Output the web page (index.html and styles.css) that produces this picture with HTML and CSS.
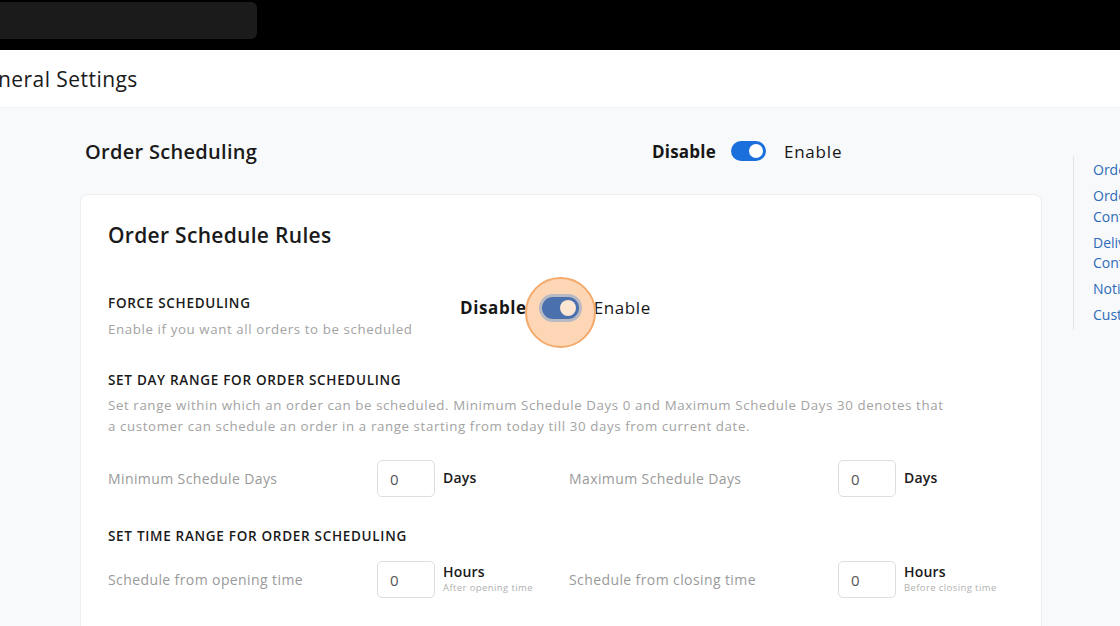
FILE: index.html
```html
<!DOCTYPE html>
<html lang="en">
<head>
<meta charset="utf-8">
<title>General Settings</title>
<link rel="stylesheet" href="styles.css">
</head>
<body>
<div class="topbar"><div class="topbar-pill"></div></div>
<header class="page-header"><h1 class="page-title">General Settings</h1></header>
<main class="main">
  <div class="content">
    <div class="section-head">
      <h2 class="section-title">Order Scheduling</h2>
      <div class="switch-group">
        <span class="sw-off">Disable</span>
        <span class="toggle"><span class="knob"></span></span>
        <span class="sw-on">Enable</span>
      </div>
    </div>
    <section class="card">
      <h3 class="card-title">Order Schedule Rules</h3>
      <div class="rule-row">
        <div class="rule-text">
          <div class="rule-label">FORCE SCHEDULING</div>
          <div class="rule-desc">Enable if you want all orders to be scheduled</div>
        </div>
        <div class="switch-group switch-group--inner">
          <span class="sw-off">Disable</span>
          <span class="toggle-wrap">
            <span class="click-ring"></span>
            <span class="toggle toggle--focus"><span class="knob"></span></span>
          </span>
          <span class="sw-on">Enable</span>
        </div>
      </div>
      <div class="rule-block">
        <div class="rule-label">SET DAY RANGE FOR ORDER SCHEDULING</div>
        <p class="rule-desc rule-desc--wide">Set range within which an order can be scheduled. Minimum Schedule Days 0 and Maximum Schedule Days 30 denotes that a customer can schedule an order in a range starting from today till 30 days from current date.</p>
        <div class="field-grid">
          <div class="field">
            <span class="field-label">Minimum Schedule Days</span>
            <span class="num-input">0</span>
            <span class="unit"><b>Days</b></span>
          </div>
          <div class="field">
            <span class="field-label">Maximum Schedule Days</span>
            <span class="num-input">0</span>
            <span class="unit"><b>Days</b></span>
          </div>
        </div>
      </div>
      <div class="rule-block rule-block--time">
        <div class="rule-label">SET TIME RANGE FOR ORDER SCHEDULING</div>
        <div class="field-grid field-grid--time">
          <div class="field">
            <span class="field-label">Schedule from opening time</span>
            <span class="num-input">0</span>
            <span class="unit"><b>Hours</b><small>After opening time</small></span>
          </div>
          <div class="field">
            <span class="field-label">Schedule from closing time</span>
            <span class="num-input">0</span>
            <span class="unit"><b>Hours</b><small>Before closing time</small></span>
          </div>
        </div>
      </div>
    </section>
  </div>
  <nav class="side-nav">
    <a href="#">Order Types</a>
    <a href="#">Order Confirmation</a>
    <a href="#">Delivery Configuration</a>
    <a href="#">Notifications</a>
    <a href="#">Customers</a>
  </nav>
</main>
</body>
</html>
```

FILE: styles.css
```css
* { box-sizing: border-box; }
html, body { margin: 0; padding: 0; }
body {
  width: 1120px;
  height: 626px;
  overflow: hidden;
  font-family: "Open Sans", "Noto Sans", sans-serif;
  color: #161616;
  background: #f8f9fa;
}
.topbar {
  height: 50px;
  background: #000;
  padding-top: 2px;
}
.topbar-pill {
  width: 257px;
  height: 37px;
  background: #1b1b1b;
  border-radius: 0 6px 6px 0;
}
.page-header {
  height: 58px;
  background: #fff;
  display: flex;
  align-items: center;
  border-bottom: 1px solid #f1f2f4;
}
.page-title {
  margin: 0 0 0 -30px;
  font-size: 21px;
  font-weight: 400;
  color: #1a1a1a;
  letter-spacing: 0.45px;
}
.main {
  display: flex;
  align-items: flex-start;
  padding-left: 80px;
  width: 1120px;
  overflow: hidden;
}
.content {
  width: 962px;
  flex: none;
}
.section-head {
  display: grid;
  grid-template-columns: 567px 1fr;
  align-items: center;
  height: 86px;
  padding-left: 5px;
}
.section-title {
  margin: 0;
  font-size: 20px;
  font-weight: 600;
  color: #1a1a1a;
  letter-spacing: 0.3px;
}
.switch-group {
  display: flex;
  align-items: center;
  font-size: 17px;
}
.sw-off { font-weight: 700; letter-spacing: 0.2px; }
.sw-on { font-weight: 400; letter-spacing: 0.8px; }
.toggle {
  position: relative;
  width: 35px;
  height: 20px;
  border-radius: 10px;
  background: #1b6fdc;
  margin: 0 18px 0 15px;
  display: inline-block;
}
.knob {
  position: absolute;
  right: 3px;
  top: 3px;
  width: 14px;
  height: 14px;
  border-radius: 50%;
  background: #fff;
}
.card {
  background: #fff;
  border: 1px solid #eceef0;
  border-radius: 8px;
  padding: 26px 27px 40px;
  height: 460px;
}
.card-title {
  margin: 0 0 44px;
  font-size: 21px;
  font-weight: 600;
  color: #1a1a1a;
  letter-spacing: 0.3px;
}
.rule-row {
  display: grid;
  grid-template-columns: 352px 1fr;
  align-items: start;
}
.rule-label {
  font-size: 13.5px;
  font-weight: 600;
  color: #1a1a1a;
  line-height: 20px;
  letter-spacing: 0.7px;
}
.rule-desc {
  margin: 6px 0 0;
  font-size: 13.3px;
  color: #a3a3a3;
  line-height: 21px;
  letter-spacing: 0.6px;
}
.rule-desc--wide { max-width: 845px; margin-top: 5px; }
.switch-group--inner { padding-top: 3px; }
.switch-group--inner .sw-off { letter-spacing: 0.6px; }
.switch-group--inner .sw-on { letter-spacing: 0.6px; }
.toggle-wrap {
  position: relative;
  display: inline-flex;
  align-items: center;
  margin: 0 15px 0 15px;
}
.switch-group--inner .toggle { margin: 0; }
.click-ring {
  position: absolute;
  left: 50%;
  top: 50%;
  width: 71px;
  height: 71px;
  margin: -31px 0 0 -35px;
  border-radius: 50%;
  background: #fdd6b6;
  border: 2px solid #f3aa6c;
}
.toggle--focus {
  width: 37px;
  height: 22px;
  border-radius: 11px;
  background: #4a70ad;
  box-shadow: 0 0 0 3px #b9b9c4;
}
.toggle--focus .knob {
  width: 16px;
  height: 16px;
  background: #fde6d2;
}
.rule-block { margin-top: 30px; }
.rule-block--time { margin-top: 29px; }
.field-grid {
  display: grid;
  grid-template-columns: 461px 1fr;
  margin-top: 23px;
}
.field-grid--time { margin-top: 15px; }
.field {
  display: flex;
  align-items: center;
}
.field-label {
  width: 269px;
  font-size: 14px;
  color: #9a9a9a;
  letter-spacing: 0.4px;
}
.num-input {
  width: 58px;
  height: 37px;
  border: 1px solid #dedede;
  border-radius: 5px;
  display: flex;
  align-items: center;
  padding-left: 12px;
  font-size: 15px;
  color: #555;
}
.unit {
  margin-left: 8px;
  display: flex;
  flex-direction: column;
  align-self: flex-start;
  padding-top: 9px;
}
.field-grid--time .unit { padding-top: 2px; }
.unit b {
  font-size: 14px;
  font-weight: 600;
  color: #1a1a1a;
  line-height: 18px;
  letter-spacing: 0.2px;
}
.unit small {
  font-size: 9.5px;
  color: #b0b0b0;
  line-height: 13px;
  letter-spacing: 0.4px;
}
.side-nav {
  margin: 48px 0 0 31px;
  border-left: 1px solid #e2e4e8;
  padding: 4px 0 4px 19px;
  display: flex;
  flex-direction: column;
  gap: 5.5px;
  width: 130px;
  flex: none;
}
.side-nav a {
  color: #2e6bb8;
  text-decoration: none;
  font-size: 14px;
  line-height: 20.5px;
  width: 92px;
}
```
